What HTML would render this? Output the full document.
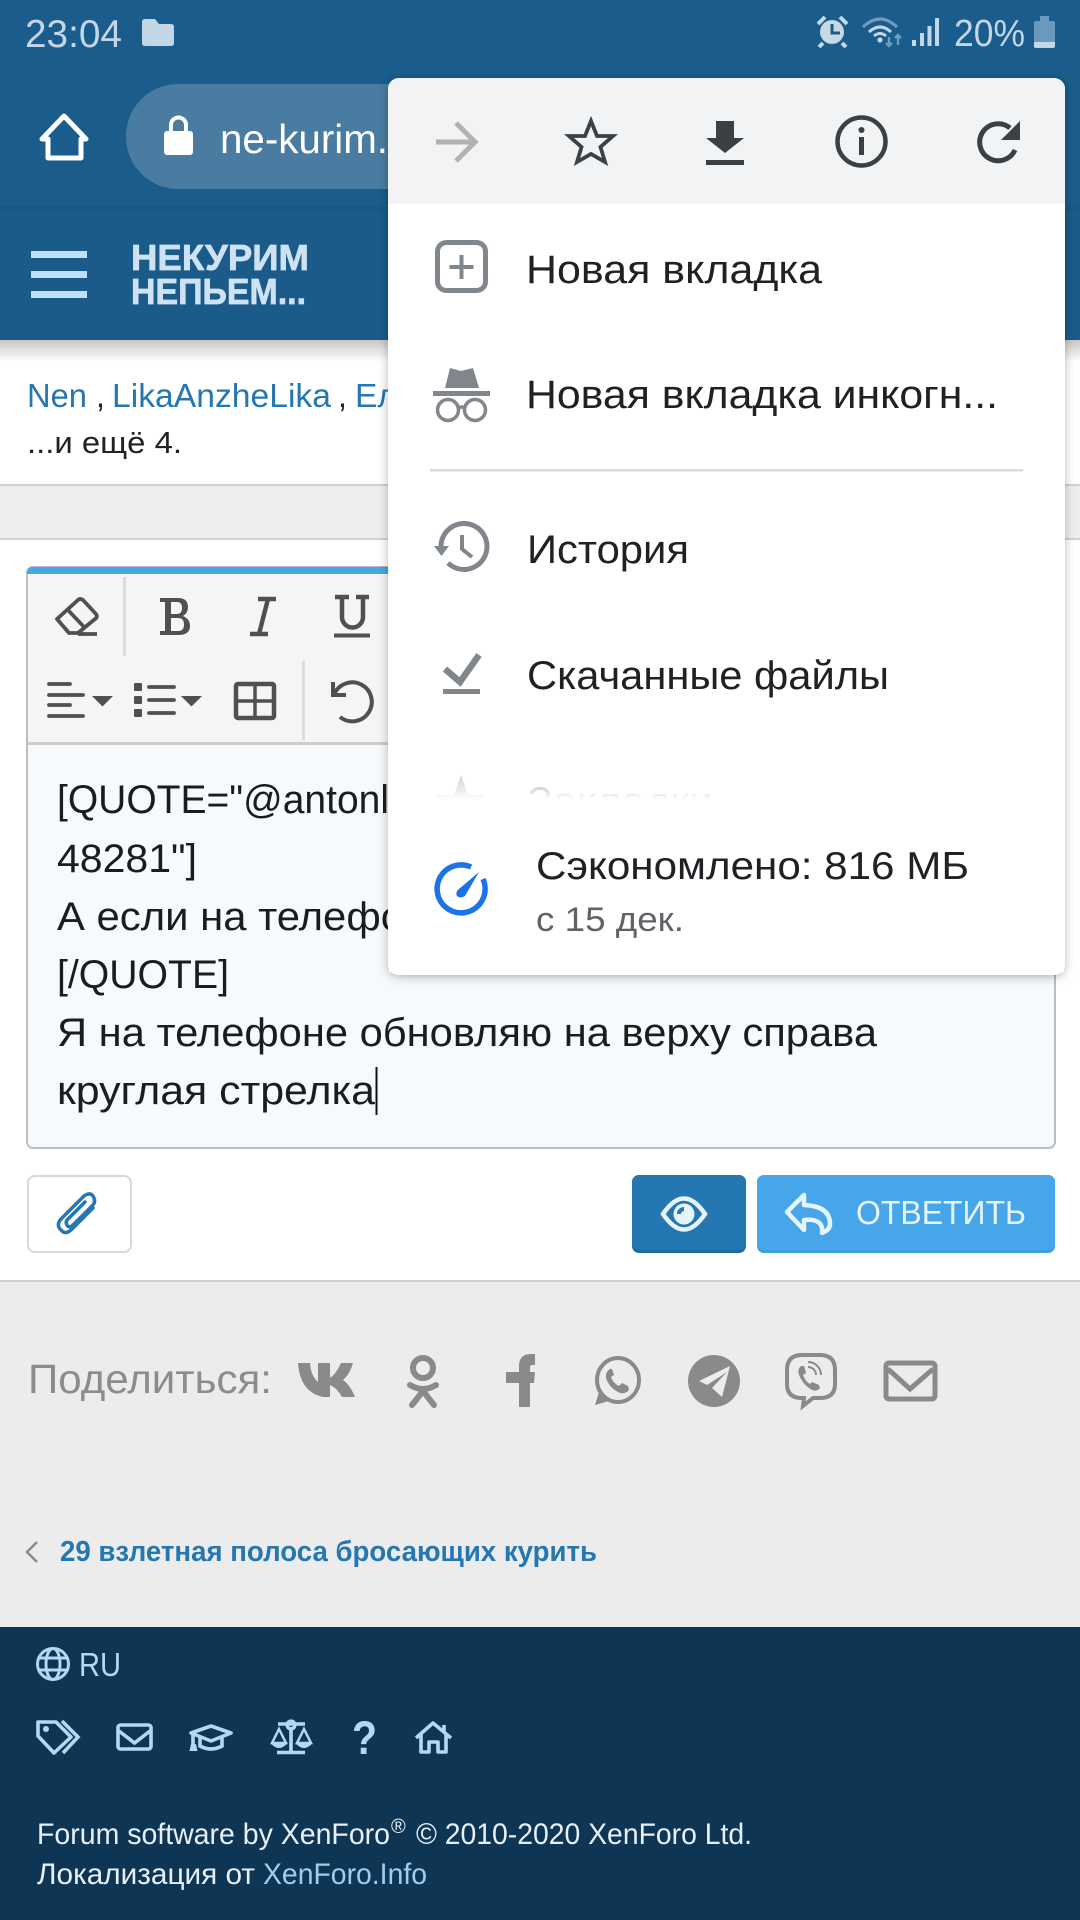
<!DOCTYPE html>
<html lang="ru"><head><meta charset="utf-8"><title>Ответить</title>
<style>
html,body{margin:0;padding:0;width:1080px;height:1920px;overflow:hidden;background:#fff}
svg{display:block}
text{font-family:"Liberation Sans","Noto Sans CJK SC",sans-serif}
</style></head><body>
<svg xmlns="http://www.w3.org/2000/svg" width="1080" height="1920" viewBox="0 0 1080 1920">
<defs>
<linearGradient id="sh" x1="0" y1="0" x2="0" y2="1"><stop offset="0" stop-color="#000" stop-opacity=".22"/><stop offset="1" stop-color="#000" stop-opacity="0"/></linearGradient>
<linearGradient id="fade" x1="0" y1="0" x2="0" y2="1"><stop offset="0" stop-color="#fff" stop-opacity=".55"/><stop offset="1" stop-color="#fff" stop-opacity="1"/></linearGradient>
<filter id="ms" x="-5%" y="-5%" width="110%" height="110%"><feDropShadow dx="0" dy="2" stdDeviation="5" flood-color="#000" flood-opacity=".28"/></filter>
<clipPath id="mc"><rect x="388" y="78" width="677" height="897" rx="11"/></clipPath>
</defs>

<!-- top bars -->
<rect width="1080" height="210" fill="#1a5c8b"/>
<rect y="210" width="1080" height="130" fill="#1b5b89"/>
<rect y="206" width="1080" height="6" fill="#18567f" opacity=".6"/>
<rect y="340" width="1080" height="22" fill="url(#sh)"/>

<!-- status bar -->
<text x="25" y="47" font-size="39" fill="#c3d6e6" textLength="97" lengthAdjust="spacingAndGlyphs">23:04</text>
<path d="M142 22q0-3 3-3h10l4 5h12q3 0 3 3v16q0 3-3 3h-26q-3 0-3-3z" fill="#c3d6e6"/>
<g fill="#c9d8e5" stroke="#c9d8e5">
<circle cx="832" cy="32" r="12" stroke="none"/>
<path d="M818 24l7-7M847 24l-7-7M823 43l-4 4M842 43l4 4" stroke-width="4" fill="none"/>
<path d="M832 24v9h8" stroke="#1a5c8b" stroke-width="3" fill="none"/>
</g>
<g fill="none" stroke="#c3d6e6">
<path d="M863 27q17-16 34 0" stroke="#6f9cbf" stroke-width="3"/>
<path d="M869 32q11-10 22 0" stroke-width="3"/>
<path d="M874 36q6-5 12 0" stroke-width="3"/>
</g>
<circle cx="880" cy="40" r="2.6" fill="#c3d6e6"/>
<path d="M889 37v9M886 43l3 3 3-3" stroke="#6f9cbf" stroke-width="2.4" fill="none"/>
<path d="M898 45v-10M895 38l3-3 3 3" stroke="#6f9cbf" stroke-width="2.4" fill="none"/>
<g fill="#c3d6e6"><rect x="912" y="40" width="4" height="6"/><rect x="920" y="33" width="4" height="13"/><rect x="927.500" y="26" width="4" height="20" /><rect x="935" y="18" width="4" height="28"/></g>
<text x="954" y="46" font-size="38" fill="#c3d6e6" textLength="71" lengthAdjust="spacingAndGlyphs">20%</text>
<path d="M1040 16h9v5h4q2 0 2 2v23q0 2-2 2h-17q-2 0-2-2V23q0-2 2-2h4z" fill="#6a99bd"/>
<path d="M1034 42h21v4q0 2-2 2h-17q-2 0-2-2z" fill="#c3d6e6"/>

<!-- toolbar -->
<path d="M64 116L42 139H48V158H81V139H86Z" fill="none" stroke="#fff" stroke-width="5" stroke-linejoin="round"/>
<rect x="126" y="84" width="330" height="105" rx="52" fill="#4a7ca1"/>
<rect x="164" y="131" width="29" height="24" rx="3" fill="#fff"/>
<path d="M171 132v-7a7.500 7.500 0 0 1 15 0v7" fill="none" stroke="#fff" stroke-width="4"/>
<text x="220" y="153" font-size="41" fill="#fff" textLength="168" lengthAdjust="spacingAndGlyphs">ne-kurim.</text>

<!-- header -->
<g fill="#bfe0f7"><rect x="31" y="251" width="56" height="7"/><rect x="31" y="271" width="56" height="7"/><rect x="31" y="291" width="56" height="7"/></g>
<text x="131" y="270" font-size="36" font-weight="700" fill="#cfe2f3" stroke="#cfe2f3" stroke-width=".7" textLength="178" lengthAdjust="spacingAndGlyphs">НЕКУРИМ</text>
<text x="131" y="304" font-size="36" font-weight="700" fill="#cfe2f3" stroke="#cfe2f3" stroke-width=".7" textLength="175" lengthAdjust="spacingAndGlyphs">НЕПЬЕМ...</text>

<!-- names -->
<g font-size="33" fill="#2577b1">
<text x="27" y="407" textLength="60" lengthAdjust="spacingAndGlyphs">Nen</text>
<text x="112" y="407" textLength="219" lengthAdjust="spacingAndGlyphs">LikaAnzheLika</text>
<text x="355" y="407" textLength="42" lengthAdjust="spacingAndGlyphs">Ел</text>
</g>
<text x="96" y="407" font-size="32" fill="#222">,</text>
<text x="338" y="407" font-size="32" fill="#222">,</text>
<text x="27" y="453" font-size="31" fill="#222" textLength="155" lengthAdjust="spacingAndGlyphs">...и ещё 4.</text>

<!-- band -->
<rect y="484" width="1080" height="56" fill="#eeeeee"/>
<rect y="484" width="1080" height="2" fill="#cfcfcf"/>
<rect y="538" width="1080" height="2" fill="#d2d2d2"/>

<!-- editor -->
<rect x="27" y="567" width="1028" height="581" rx="6" fill="#f6fafd" stroke="#bdbdbd" stroke-width="2"/>
<path d="M28 744V575h1026v169z" fill="#f5f5f5"/>
<rect x="27" y="742" width="1028" height="3" fill="#cccccc"/>
<path d="M27 574v-1q0-6 6-6h1016q6 0 6 6v1z" fill="#47a6e6"/>
<rect x="123" y="577" width="3" height="79" fill="#dcdcdc"/>
<rect x="302" y="661" width="3" height="79" fill="#dcdcdc"/>
<path fill-rule="evenodd" fill="#505050" d="M160 598H178Q188 598 188 607Q188 613 183 616Q190 619 190 626Q190 635 178 635H160V631H165V602H160ZM171 602V614H177Q182 614 182 608Q182 602 177 602ZM171 618V631H178Q184 631 184 624.500Q184 618 178 618Z"/>
<g fill="none" stroke="#505050" stroke-width="3.800">
<path d="M57 619L78 600Q80 598 83 600L96 614Q98 617 95 619L78 633H69Z" stroke-linejoin="round"/>
<path d="M67 609L85 628M78 634H97"/>
<path d="M258 599H276M250 634H268M268 599L259 634" stroke-width="4.500"/>
<path d="M335 597H349M356 597H369M342 597V617A10.500 10.500 0 0 0 363 617V597" stroke-width="4.500"/>
<path d="M334 635.500H370" stroke-width="4"/>
<path d="M49 684H70M49 695H83M49 705H70M49 716H83" stroke-linecap="round"/>
<path d="M149 687H174M149 700H174M149 713H174" stroke-linecap="round"/>
<rect x="236" y="684" width="38" height="34" rx="2" stroke-width="4.500"/>
<path d="M255 684V718M236 701H274" stroke-width="3.500"/>
<path d="M333 682V695H346" stroke-width="4"/>
<path d="M334 695A19.500 19.500 0 1 1 340 717" stroke-width="4"/>
</g>
<g fill="#505050">
<path d="M92 696h21l-10.500 10.500zM181 696h21l-10.500 10.500z"/>
<rect x="134" y="683" width="8" height="8" rx="1"/><rect x="134" y="696" width="8" height="8" rx="1"/><rect x="134" y="709" width="8" height="8" rx="1"/>
</g>
<g font-size="39.500" fill="#1c1c1c">
<text x="57" y="813" textLength="332" lengthAdjust="spacingAndGlyphs">[QUOTE="@antonl</text>
<text x="57" y="872" textLength="140" lengthAdjust="spacingAndGlyphs">48281"]</text>
<text x="57" y="930" textLength="347" lengthAdjust="spacingAndGlyphs">А если на телефо</text>
<text x="57" y="988" textLength="172" lengthAdjust="spacingAndGlyphs">[/QUOTE]</text>
<text x="57" y="1046" textLength="820" lengthAdjust="spacingAndGlyphs">Я на телефоне обновляю на верху справа</text>
<text x="57" y="1104" textLength="318" lengthAdjust="spacingAndGlyphs">круглая стрелка</text>
</g>
<rect x="375.500" y="1067" width="2" height="48" fill="#111"/>

<!-- buttons -->
<rect x="28" y="1176" width="103" height="76" rx="7" fill="#fff" stroke="#d8d8d8" stroke-width="2"/>
<path d="M93 1208L72 1229Q66 1235 62 1231L60 1229Q56 1224 62 1218L84 1196Q90 1192 93 1196L94 1198Q96 1203 91 1207L72 1226Q68 1228 67 1225Q65 1222 68 1219L85 1202" fill="none" stroke="#2577b1" stroke-width="3.500" stroke-linecap="round"/>
<rect x="632" y="1175" width="114" height="78" rx="7" fill="#1f6a9f"/>
<rect x="632" y="1175" width="114" height="75" rx="7" fill="#2577b1"/>
<path d="M663 1214Q684 1183 705 1214Q684 1245 663 1214Z" fill="none" stroke="#e6f4fd" stroke-width="4.500"/>
<circle cx="684" cy="1214" r="10.500" fill="#e6f4fd"/>
<path d="M684 1207a7 7 0 0 0-7 7h4a3 3 0 0 1 3-3z" fill="#2577b1"/>
<rect x="757" y="1175" width="298" height="78" rx="7" fill="#3f9fe0"/>
<rect x="757" y="1175" width="298" height="75" rx="7" fill="#47a6e9"/>
<path d="M787 1212L804 1195V1205Q830 1206 830 1224Q830 1230 822 1233Q824 1218 804 1220V1230Z" fill="none" stroke="#e6f4fd" stroke-width="4.500" stroke-linejoin="round"/>
<text x="856" y="1224" font-size="33" fill="#e6f4fd" textLength="170" lengthAdjust="spacingAndGlyphs">ОТВЕТИТЬ</text>

<!-- white below editor + gray area -->
<rect y="1280" width="1080" height="348" fill="#ececec"/>
<rect y="1280" width="1080" height="2" fill="#cfcfcf"/>
<text x="28" y="1393" font-size="41" fill="#8c8c8c" textLength="244" lengthAdjust="spacingAndGlyphs">Поделиться:</text>
<g fill="#8a8a8a">
<path d="M298 1363H310Q311 1376 318 1382V1363H330V1378Q336 1374 341 1363H353Q350 1374 343 1380Q350 1385 355 1397H342Q337 1388 330 1385V1397H323Q300 1392 298 1363Z"/>
<path d="M519 1407V1383H506V1372H519V1366Q519 1354 531 1354H535V1365H532Q530 1365 530 1368V1372H535L534 1383H530V1407Z"/>
<path d="M595 1405l4-13 10 9z"/>
<path d="M610 1369q-5 3-4 9 3 10 14 15 6 1 9-3l-1-4-6-3-3 3q-6-3-8-9l3-2-2-6z"/>
<ellipse cx="714" cy="1381" rx="26" ry="26"/>
<path d="M787 1370q0-15 15-15h18q15 0 15 15v14q0 14-15 14h-7l-10 8 1-8h-2q-15 0-15-14z" fill="none" stroke="#8a8a8a" stroke-width="4"/>
<path d="M801 1366q-4 3-2 9 4 10 13 15 5 2 8-2l-1-3-7-3-2 2q-5-3-7-9l3-2-2-7z"/>
</g>
<path d="M699 1381L730 1366L722 1397L712 1388L727 1372L707 1385Z" fill="#ececec"/>
<g fill="none" stroke="#8a8a8a">
<circle cx="423" cy="1368" r="10" stroke-width="6"/>
<path d="M410 1385Q423 1393 436 1385" stroke-width="6" stroke-linecap="round"/>
<path d="M423 1391L412 1405M423 1391L434 1405" stroke-width="6" stroke-linecap="round"/>
<ellipse cx="618" cy="1380" rx="21" ry="22" stroke-width="4"/>
<path d="M816 1375a8 8 0 0 0-8-8M821 1375a13 13 0 0 0-13-13" stroke-width="2"/>
<rect x="886" y="1363" width="49" height="36" rx="3" stroke-width="5"/>
<path d="M888 1369L910 1389L933 1369" stroke-width="5"/>
</g>

<!-- back link -->
<path d="M37 1542L27 1552L37 1562" fill="none" stroke="#8c8c8c" stroke-width="2.500"/>
<text x="60" y="1561" font-size="29" font-weight="700" fill="#2577b1" textLength="537" lengthAdjust="spacingAndGlyphs">29 взлетная полоса бросающих курить</text>

<!-- footer -->
<rect y="1627" width="1080" height="293" fill="#0f3554"/>
<g fill="none" stroke="#b5d8f2" stroke-width="3">
<circle cx="53" cy="1664" r="15.500"/>
<ellipse cx="53" cy="1664" rx="7" ry="15.500"/>
<path d="M38 1658H68M38 1670H68"/>
</g>
<text x="79" y="1676" font-size="33" fill="#b5d8f2" textLength="42" lengthAdjust="spacingAndGlyphs">RU</text>
<g fill="none" stroke="#b5d8f2" stroke-width="3.600">
<path d="M38 1722H56L71 1737L54 1753L38 1736Z" stroke-linejoin="round"/>
<path d="M62 1721L78 1737L63 1753"/>
<rect x="118" y="1725" width="33" height="24" rx="2.500"/>
<path d="M119 1731L134.500 1743L150 1731"/>
<path d="M191 1733L211 1726L231 1733L211 1741Z" stroke-linejoin="round"/>
<path d="M200 1737V1746Q211 1752 222 1746V1737M193 1734V1744"/>
<path d="M278 1724H305M291 1729V1752M277 1752.500H305"/>
<circle cx="291" cy="1725" r="3.800"/>
<path d="M279 1729L272 1743H286ZM304 1729L297 1743H311Z" stroke-width="2.500"/>
<path d="M272 1744Q279 1751 286 1744ZM297 1744Q304 1751 311 1744Z" fill="#b5d8f2" stroke-width="1"/>
<path d="M416 1738L433 1723L451 1738M421 1734V1752H429V1742H438V1752H446V1734" stroke-linejoin="round"/>
<path d="M444 1733V1725"/>
</g>
<circle cx="46" cy="1729" r="3" fill="#b5d8f2"/>
<path d="M191 1744h5l1.500 7h-8z" fill="#b5d8f2"/>
<text x="352" y="1754" font-size="47" font-weight="700" fill="#b5d8f2" textLength="25" lengthAdjust="spacingAndGlyphs">?</text>
<g font-size="30" fill="#e6f0f8">
<text x="37" y="1844" textLength="353" lengthAdjust="spacingAndGlyphs">Forum software by XenForo</text>
<text x="391" y="1833" font-size="20">®</text>
<text x="416" y="1844" textLength="336" lengthAdjust="spacingAndGlyphs">© 2010-2020 XenForo Ltd.</text>
<text x="37" y="1884" textLength="218" lengthAdjust="spacingAndGlyphs">Локализация от</text>
<text x="263" y="1884" fill="#9fcdf0" textLength="164" lengthAdjust="spacingAndGlyphs">XenForo.Info</text>
</g>

<!-- chrome menu -->
<rect x="388" y="78" width="677" height="897" rx="11" fill="#fff" filter="url(#ms)"/>
<g clip-path="url(#mc)">
<rect x="388" y="78" width="677" height="126" fill="#f1f3f4"/>
</g>
<path d="M436 142H474M456 123L475 142L456 161" fill="none" stroke="#b0b2b4" stroke-width="5"/>
<path d="M591 121L597 136H613L600.500 147L605 162L591 154L577 162L581.500 147L569 136H585Z" fill="none" stroke="#3c4043" stroke-width="3.800" stroke-linejoin="miter"/>
<path d="M716 121H734V138H744L725 153L706 138H716ZM706 160H744V165H706Z" fill="#3c4043"/>
<circle cx="861.500" cy="141.500" r="24" fill="none" stroke="#3c4043" stroke-width="4.500"/>
<rect x="859" y="137" width="5" height="18" fill="#3c4043"/><circle cx="861.500" cy="130" r="3" fill="#3c4043"/>
<path d="M1015 150A18.500 18.500 0 1 1 1010 128" fill="none" stroke="#3c4043" stroke-width="5"/>
<path d="M1020 121V140H1001Z" fill="#3c4043"/>

<rect x="437.500" y="242.500" width="48" height="48" rx="9" fill="none" stroke="#80868b" stroke-width="5"/>
<path d="M461.500 255V279M449.500 267H473.500" stroke="#80868b" stroke-width="4" fill="none"/>
<text x="526" y="283" font-size="40" fill="#202124" textLength="296" lengthAdjust="spacingAndGlyphs">Новая вкладка</text>

<path d="M450 368L461 371L473 368L479 388H445Z" fill="#80868b"/>
<rect x="433" y="391" width="57" height="5" fill="#80868b"/>
<g fill="none" stroke="#80868b" stroke-width="3.500"><circle cx="448" cy="410" r="10.500"/><circle cx="475" cy="410" r="10.500"/><path d="M458 408q3-2 7 0"/></g>
<text x="526" y="408" font-size="40" fill="#202124" textLength="472" lengthAdjust="spacingAndGlyphs">Новая вкладка инкогн...</text>

<rect x="430" y="469" width="593" height="2.500" fill="#dadce0"/>

<path d="M441 547A23 23 0 1 1 448 563" fill="none" stroke="#80868b" stroke-width="5"/>
<path d="M434 546H449L441.500 556Z" fill="#80868b"/>
<path d="M462 535V549L472 557" fill="none" stroke="#80868b" stroke-width="4"/>
<text x="527" y="563" font-size="40" fill="#202124" textLength="162" lengthAdjust="spacingAndGlyphs">История</text>

<path d="M445 669L460 682L479 655" fill="none" stroke="#80868b" stroke-width="6.500"/>
<rect x="443" y="689" width="37" height="5" fill="#80868b"/>
<text x="527" y="689" font-size="40" fill="#202124" textLength="362" lengthAdjust="spacingAndGlyphs">Скачанные файлы</text>

<path d="M461 775L468 795H487L472 807L478 826L461 815L444 826L450 807L435 795H454Z" fill="#80868b"/>
<text x="527" y="815" font-size="40" fill="#202124" textLength="186" lengthAdjust="spacingAndGlyphs">Закладки</text>
<rect x="389" y="770" width="675" height="30" fill="url(#fade)"/>
<rect x="389" y="800" width="675" height="172" fill="#fff"/>

<path d="M471 867A24 24 0 1 0 483 879" fill="none" stroke="#1a73e8" stroke-width="5.500"/>
<path d="M479 872L465 896Q460 899 457 896Q455 892 459 889Z" fill="#1a73e8"/>
<text x="536" y="879" font-size="39" fill="#202124" textLength="433" lengthAdjust="spacingAndGlyphs">Сэкономлено: 816 МБ</text>
<text x="536" y="931" font-size="34" fill="#5f6368" textLength="148" lengthAdjust="spacingAndGlyphs">с 15 дек.</text>
</svg>
</body></html>
